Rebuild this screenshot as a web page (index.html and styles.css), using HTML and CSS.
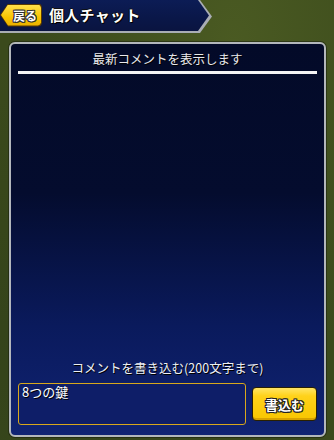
FILE: index.html
```html
<!DOCTYPE html>
<html lang="ja">
<head>
<meta charset="utf-8">
<link rel="stylesheet" href="styles.css">
</head>
<body>
<div class="screen">
  <div class="header">
    <div class="header-inner">
      <div class="back"><span class="back-label">戻る</span></div>
      <div class="title">個人チャット</div>
    </div>
  </div>
  <div class="panel">
    <div class="panel-title">最新コメントを表示します</div>
    <div class="rule"></div>
    <div class="messages"></div>
    <div class="write-label">コメントを書き込む(200文字まで)</div>
    <div class="write-row">
      <div class="input">8つの鍵</div>
      <div class="submit">書込む</div>
    </div>
  </div>
</div>
</body>
</html>
```
FILE: styles.css
```css
html, body {
  margin: 0;
  padding: 0;
}
body {
  width: 334px;
  height: 440px;
  overflow: hidden;
  font-family: "Noto Sans CJK JP", "Noto Sans", sans-serif;
  background:
    radial-gradient(ellipse at 70% 10%, #4a5a22 0%, rgba(74,90,34,0) 60%),
    radial-gradient(ellipse at 10% 80%, #34431a 0%, rgba(52,67,26,0) 60%),
    #3b4a1c;
}
.screen {
  display: flex;
  flex-direction: column;
  height: 440px;
}
.header {
  width: 212px;
  height: 33px;
  background: #a9adb4;
  clip-path: polygon(0 0, 200px 0, 212px 16.5px, 200px 33px, 0 33px);
}
.header-inner {
  width: 209px;
  height: 31px;
  background: linear-gradient(180deg, #0c1c55 0%, #0a1748 60%, #0a1440 100%);
  clip-path: polygon(0 0, 198px 0, 209px 15.5px, 198px 31px, 0 31px);
  display: flex;
  align-items: center;
  gap: 7px;
}
.back {
  width: 42px;
  height: 23px;
  margin-top: -1px;
  background: #5a3a00;
  clip-path: polygon(0 50%, 8px 0, 38px 0, 41px 1px, 42px 4px, 42px 19px, 41px 22px, 38px 23px, 8px 23px);
  display: flex;
}
.back-label {
  flex: 1;
  margin: 1px 1px 1px 1px;
  background: linear-gradient(180deg, #ffe04a 0%, #f8c400 60%, #eab000 100%);
  clip-path: polygon(0 50%, 7px 0, 37px 0, 39px 1px, 40px 3px, 40px 18px, 39px 20px, 37px 21px, 7px 21px);
  display: flex;
  align-items: center;
  justify-content: flex-end;
  padding-right: 4px;
  font-size: 12px;
  font-weight: 700;
  color: #fff;
  text-shadow: 1px 0 0 #333, -1px 0 0 #333, 0 1px 0 #333, 0 -1px 0 #333, 1px 1px 0 #333, -1px -1px 0 #333, 1px -1px 0 #333, -1px 1px 0 #333;
}
.title {
  font-size: 15px;
  font-weight: 700;
  color: #fff;
  letter-spacing: 0.3px;
  margin-top: -2px;
  text-shadow: 1px 1px 0 #000, -1px 0 0 #111, 0 -1px 0 #111, 1px 0 0 #111;
}
.panel {
  margin: 9px 8px 3px 9px;
  flex: 1;
  border: 2px solid #b3b7bc;
  border-radius: 6px;
  box-shadow: 0 0 0 1px rgba(20,25,10,0.5);
  background: linear-gradient(180deg, #030a28 0%, #040c2e 38%, #0a1a5c 72%, #102373 100%);
  display: flex;
  flex-direction: column;
  padding: 6px 7px 10px 7px;
}
.panel-title {
  text-align: center;
  font-size: 12.5px;
  line-height: 17px;
  color: #e8e8ec;
  text-shadow: 1px 1px 0 #000;
}
.rule {
  height: 3px;
  background: #f4f4f4;
  margin-top: 4px;
}
.messages {
  flex: 1;
}
.write-label {
  text-align: center;
  font-size: 12.5px;
  line-height: 17px;
  color: #eef0f4;
  text-shadow: 1px 1px 0 #000;
  margin-bottom: 7px;
}
.write-row {
  display: flex;
  align-items: center;
  gap: 6px;
}
.input {
  width: 223px;
  height: 40px;
  box-sizing: content-box;
  border: 1.5px solid #d8a81c;
  border-radius: 3px;
  background: #0e1e68;
  color: #fff;
  font-size: 13px;
  line-height: 16px;
  padding: 0 3px;
  text-shadow: 1px 1px 0 #000;
}
.submit {
  width: 64px;
  height: 32px;
  border: 1px solid #2a2000;
  border-radius: 4px;
  background: linear-gradient(180deg, #ffe566 0%, #ffd21a 25%, #f8c600 100%);
  box-shadow: inset 0 -2px 0 #d8a200;
  display: flex;
  align-items: center;
  justify-content: center;
  font-size: 13px;
  font-weight: 700;
  color: #fff;
  text-shadow: 1px 0 0 #222, -1px 0 0 #222, 0 1px 0 #222, 0 -1px 0 #222, 1px 1px 0 #222, -1px -1px 0 #222, 1px -1px 0 #222, -1px 1px 0 #222;
}
```
